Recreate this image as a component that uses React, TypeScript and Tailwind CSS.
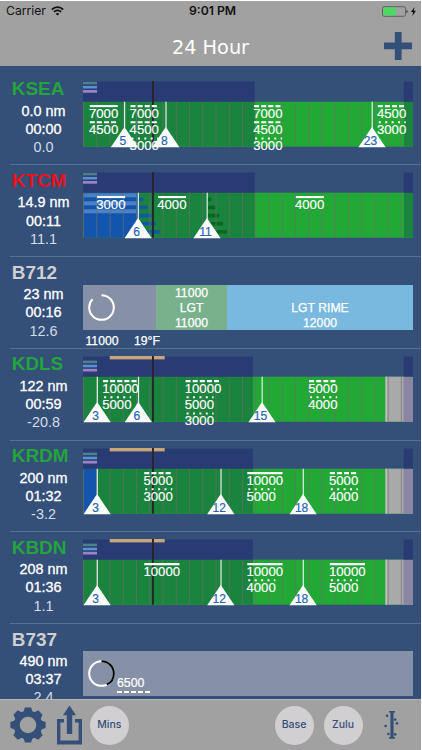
import React from 'react';

type Cover = 'ovc' | 'bkn' | 'sct';

interface Ceiling {
  x: number;
  layers: [Cover, number][];
}

interface Station {
  id: string;
  idClass: string;
  distance: string;
  time: string;
  wind: string;
  nightEnd: number;
  hazard?: boolean;
  markers: [number, number][];
  ceilings: Ceiling[];
  noDataFrom?: number;
  mvfrTo?: number;
  stripes?: boolean;
}

// Chart coordinates: x starts at the chart's left edge, y at the row's top
const CHART_W = 330;
const BAR_TOP = 28.7;
const BAR_H = 45;
const NIGHT_TOP = 8.5;
const FONT = '"Liberation Sans", Arial, sans-serif';

const stations: Station[] = [
  {
    id: 'KSEA',
    idClass: 'text-[#23a43c]',
    distance: '0.0 nm',
    time: '00:00',
    wind: '0.0',
    nightEnd: 171.7,
    markers: [[41.6, 5], [83, 8], [289.2, 23]],
    ceilings: [
      { x: 6, layers: [['ovc', 7000], ['bkn', 4500]] },
      { x: 46.7, layers: [['bkn', 7000], ['bkn', 4500], ['sct', 3000]] },
      { x: 170.3, layers: [['bkn', 7000], ['bkn', 4500], ['sct', 3000]] },
      { x: 294, layers: [['bkn', 4500], ['sct', 3000]] },
    ],
  },
  {
    id: 'KTCM',
    idClass: 'text-[#e8121c]',
    distance: '14.9 nm',
    time: '00:11',
    wind: '11.1',
    nightEnd: 171.7,
    markers: [[55.3, 6], [124.2, 11]],
    mvfrTo: 55.3,
    stripes: true,
    ceilings: [
      { x: 13.3, layers: [['ovc', 3000]] },
      { x: 74.3, layers: [['ovc', 4000]] },
      { x: 212, layers: [['ovc', 4000]] },
    ],
  },
  {
    id: 'KDLS',
    idClass: 'text-[#23a43c]',
    distance: '122 nm',
    time: '00:59',
    wind: '-20.8',
    nightEnd: 170,
    hazard: true,
    markers: [[14.3, 3], [55.5, 6], [179.2, 15]],
    noDataFrom: 302.5,
    ceilings: [
      { x: 19.3, layers: [['bkn', 10000], ['sct', 5000]] },
      { x: 101.8, layers: [['bkn', 10000], ['sct', 5000], ['sct', 3000]] },
      { x: 225.3, layers: [['bkn', 5000], ['sct', 4000]] },
    ],
  },
  {
    id: 'KRDM',
    idClass: 'text-[#23a43c]',
    distance: '200 nm',
    time: '01:32',
    wind: '-3.2',
    nightEnd: 170,
    hazard: true,
    markers: [[14.3, 3], [138, 12], [220.3, 18]],
    mvfrTo: 14,
    noDataFrom: 302.5,
    ceilings: [
      { x: 60.5, layers: [['bkn', 5000], ['sct', 3000]] },
      { x: 163.5, layers: [['ovc', 10000], ['sct', 5000]] },
      { x: 246, layers: [['bkn', 5000], ['sct', 4000]] },
    ],
  },
  {
    id: 'KBDN',
    idClass: 'text-[#23a43c]',
    distance: '208 nm',
    time: '01:36',
    wind: '1.1',
    nightEnd: 170,
    hazard: true,
    markers: [[14.3, 3], [138, 12], [220.3, 18]],
    noDataFrom: 302.5,
    ceilings: [
      { x: 60.5, layers: [['ovc', 10000]] },
      { x: 163.5, layers: [['ovc', 10000], ['sct', 4000]] },
      { x: 246, layers: [['ovc', 10000], ['sct', 5000]] },
    ],
  },
];

const dashes: Record<Cover, string | undefined> = {
  ovc: undefined,
  bkn: '5 2.1',
  sct: '2 4.4',
};

function CeilingLabel({ x, layers }: Ceiling) {
  return (
    <g>
      {layers.map(([cover, feet], i) => {
        const width = String(feet).length * 7.2;
        const y = 33.1 + i * 16.2;
        return (
          <g key={i}>
            <line
              x1={cover === 'sct' ? x + 1.8 : x + 0.8}
              x2={x + width}
              y1={y}
              y2={y}
              stroke="#fff"
              strokeWidth="2.1"
              strokeDasharray={dashes[cover]}
            />
            <text x={x - 0.1} y={y + 11.5} fontSize="13.2" fill="#fff" stroke="#fff" strokeWidth="0.15" fontFamily={FONT}>
              {feet}
            </text>
          </g>
        );
      })}
    </g>
  );
}

function Marker({ x, hour }: { x: number; hour: number }) {
  return (
    <g>
      <line x1={x} x2={x} y1={BAR_TOP} y2={58} stroke="#e6efe8" strokeWidth="1.2" />
      <polygon points={`${x - 0.2},54 ${x - 13.8},74.2 ${x + 13.4},74.2`} fill="#fff" />
      <text
        x={x - 1.7}
        y="71.8"
        fontSize="12"
        textAnchor="middle"
        fill="#2564b4"
        stroke="#2564b4"
        strokeWidth="0.2"
        fontFamily={FONT}
      >
        {hour}
      </text>
    </g>
  );
}

function StationChart({ station }: { station: Station }) {
  const { nightEnd, hazard, markers, ceilings, noDataFrom, mvfrTo, stripes } = station;
  const legendTop = hazard ? 12.6 : 8.8;
  const hours = Array.from({ length: 25 }, (_, i) => 0.6 + i * 13.24);

  return (
    <svg className="block overflow-visible" width={CHART_W} height="91.7">
      <rect y={BAR_TOP} width={CHART_W} height={BAR_H} fill="#22a835" />
      <rect y={BAR_TOP} width={nightEnd} height={BAR_H} fill="#1a833d" />
      <rect x="321" y={BAR_TOP} width="9" height={BAR_H} fill="#1a833d" />
      {noDataFrom && (
        <>
          <rect x={noDataFrom} y={BAR_TOP} width={CHART_W - noDataFrom} height={BAR_H} fill="#a9a9a9" />
          <rect x={noDataFrom} y={BAR_TOP} width="1.5" height={BAR_H} fill="#c0c0c0" />
          <rect x="320.5" y={BAR_TOP} width="9.5" height={BAR_H} fill="#8985a2" />
        </>
      )}
      {mvfrTo && <rect x="0.5" y={BAR_TOP} width={mvfrTo - 0.5} height={BAR_H} fill="#1354ad" />}
      {stripes && (
        <>
          {[0, 8, 16].map((dy) => (
            <rect key={dy} x="0.5" y={29.3 + dy} width="52.8" height="4" fill="#4c82c3" />
          ))}
          {[0, 1, 2, 3, 4].map((i) => (
            <g key={i}>
              <rect x="55.3" y={33.6 + i * 8.1} width={5 + i * 4.1} height="3.6" fill="#1354ad" />
              <rect x="124.2" y={33.6 + i * 8.1} width={4.2 + i * 3.9} height="3.6" fill="#09671f" />
            </g>
          ))}
        </>
      )}
      {hours.map((x) => (
        <line key={x} x1={x} x2={x} y1={BAR_TOP} y2={BAR_TOP + BAR_H} stroke="#6e6e6e" strokeOpacity="0.65" />
      ))}
      <rect y={NIGHT_TOP} width={nightEnd} height={BAR_TOP - NIGHT_TOP} fill="#293b73" />
      <rect x="320.7" y={NIGHT_TOP} width="9.3" height={BAR_TOP - NIGHT_TOP} fill="#293b73" />
      {hazard && <rect x="26.7" y="8" width="55" height="3.4" fill="#c9a679" />}
      <rect y={legendTop} width="14" height="2.6" fill="#4d8088" />
      <rect y={legendTop + 4.1} width="14" height="2.6" fill="#5a92cf" />
      <rect y={legendTop + 8.2} width="14" height="2.7" fill="#9c83c5" />
      <rect x="69" y={NIGHT_TOP - 0.5} width="1.9" height="65.7" fill="#27242b" />
      {markers.map(([x, hour]) => (
        <Marker key={hour} x={x} hour={hour} />
      ))}
      {ceilings.map((c) => (
        <CeilingLabel key={c.x} {...c} />
      ))}
    </svg>
  );
}

interface RowProps {
  id: string;
  idClass: string;
  distance: string;
  time: string;
  wind: string;
  children: React.ReactNode;
}

function Row({ id, idClass, distance, time, wind, children }: RowProps) {
  return (
    <div className="flex h-[91.7px] shrink-0">
      <div className="w-[83px] shrink-0 pt-[4.6px] text-white">
        <div className={`pl-[11.8px] text-[18.9px] leading-[23px] font-bold ${idClass}`}>{id}</div>
        <div className="w-[87px] text-center text-[14.4px] leading-[18.2px]">
          <div className="mt-[1.4px] [-webkit-text-stroke:0.3px_white]">{distance}</div>
          <div className="[-webkit-text-stroke:0.3px_white]">{time}</div>
          <div className="text-[#d5dce6]">{wind}</div>
        </div>
      </div>
      {children}
    </div>
  );
}

function Divider() {
  return <div className="-mb-px ml-[10px] h-px shrink-0 bg-[#5a7093]" />;
}

function IcingChart() {
  return (
    <div className="w-[330px] pt-[28.7px] text-[12.2px] text-white [-webkit-text-stroke:0.25px_white]">
      <div className="flex h-[45px]">
        <div className="w-[73px] bg-[#8690a7] pt-[9px] pl-[4.5px]">
          <svg width="27" height="27" fill="none" strokeWidth="2">
            <circle cx="13.5" cy="13.5" r="12.3" stroke="#8b8f96" />
            <circle cx="13.5" cy="13.5" r="12.3" stroke="#fff" pathLength="100" strokeDasharray="87 13" transform="rotate(-90 13.5 13.5)" />
          </svg>
        </div>
        <div className="flex w-[71px] flex-col items-center bg-[#79b18c] pt-[0.8px] text-center leading-[15.4px]">
          <div>11000</div>
          <div>LGT</div>
          <div>11000</div>
        </div>
        <div className="w-[186px] bg-[#79b8df] pt-[16.2px] text-center leading-[15.4px]">
          <div>LGT RIME</div>
          <div>12000</div>
        </div>
      </div>
      <div className="flex gap-[15.5px] pt-[3.3px] pl-[2.5px] leading-[16px]">
        <span>11000</span>
        <span>19°F</span>
      </div>
    </div>
  );
}

function CloudChart() {
  return (
    <div className="w-[330px] pt-[28.5px] text-white">
      <div className="flex h-[45px] bg-[#8691a7] pt-[9px] pl-[4.5px]">
        <svg width="27" height="27" fill="none" strokeWidth="2">
          <circle cx="13.5" cy="13.5" r="12.3" stroke="#fff" />
          <circle cx="13.5" cy="13.5" r="12.3" stroke="#000" pathLength="100" strokeDasharray="43 57" transform="rotate(-90 13.5 13.5)" />
        </svg>
        <div className="pt-[14.5px] pl-[2.5px]">
          <div className="text-[12.3px] leading-[16px] [-webkit-text-stroke:0.2px_white]">6500</div>
          <svg className="block" width="33" height="3">
            <line x1="0" x2="33" y1="1" y2="1" stroke="#fff" strokeWidth="2" strokeDasharray="5 2" />
          </svg>
        </div>
      </div>
    </div>
  );
}

function StatusBar() {
  return (
    <div className="flex h-[21px] items-center justify-between pr-[5px] pl-[6px] font-['Inter'] text-[12.2px] text-[#111]">
      <div className="flex w-[80px] items-center gap-[5.5px]">
        <span>Carrier</span>
        <svg width="13" height="10" viewBox="0 0 13 10" fill="none" stroke="#111" strokeWidth="1.7">
          <path d="M0.8 3.6 C4 0.2 9 0.2 12.2 3.6" />
          <path d="M2.9 5.8 C4.9 3.8 8.1 3.8 10.1 5.8" />
          <path d="M6.5 9.6 L4.6 7.7 C5.6 6.7 7.4 6.7 8.4 7.7 Z" fill="#111" stroke="none" />
        </svg>
      </div>
      <span className="pl-[3px] text-[12.2px] font-semibold">9:01 PM</span>
      <div className="flex w-[80px] items-center justify-end gap-[2px]">
        <svg width="27" height="11" viewBox="0 0 27 11">
          <rect x="0.5" y="0.7" width="23" height="9.6" rx="1.8" fill="none" stroke="#5f5f5f" />
          <rect x="1.3" y="1.5" width="12.7" height="8" rx="0.8" fill="#4cd964" />
          <path d="M24.6 3.8 C26 4.4 26 6.6 24.6 7.2 Z" fill="#222" />
        </svg>
        <svg width="5" height="9" viewBox="0 0 5 9">
          <path d="M3.5 0 L0 5 H2.1 L1.3 9 L5 3.7 H2.8 Z" fill="#111" />
        </svg>
      </div>
    </div>
  );
}

function GearIcon() {
  return (
    <svg width="36" height="36" viewBox="-18 -18 36 36" fill="#345079">
      {[0, 45, 90, 135, 180, 225, 270, 315].map((deg) => (
        <path key={deg} d="M-5.2 -11 L-3.1 -17.6 H3.1 L5.2 -11 Z" transform={`rotate(${deg})`} />
      ))}
      <circle r="11.3" fill="none" stroke="#345079" strokeWidth="6" />
    </svg>
  );
}

function ShareIcon() {
  return (
    <svg width="26" height="40" viewBox="0 0 26 40" fill="#345079">
      <path d="M0 14 H7 V17.4 H3.4 V35.6 H21.6 V17.4 H18 V14 H25 V39.4 H0 Z" />
      <path d="M12.5 0.4 L19 10.3 H15.2 V29 H9.8 V10.3 H6 Z" />
    </svg>
  );
}

function TurbulenceIcon() {
  return (
    <svg width="16" height="28" viewBox="0 0 16 28" fill="#345079">
      <path d="M5 0 H11 V1.5 H9.6 V26.3 H11 V27.8 H5 V26.3 H6.4 V1.5 H5 Z" />
      <circle cx="3.1" cy="4.8" r="1.3" />
      <circle cx="11.2" cy="8.6" r="1.3" />
      <circle cx="13" cy="12.4" r="1.3" />
      <circle cx="1.6" cy="15" r="1.3" />
      <circle cx="4.4" cy="23" r="1.3" />
      <circle cx="11.2" cy="23.4" r="1.3" />
    </svg>
  );
}

function RoundButton({ label }: { label: string }) {
  return (
    <button className="size-[39px] shrink-0 rounded-full bg-[#d1cfd1] font-['Inter'] text-[10.5px] font-medium text-[#345079]">
      {label}
    </button>
  );
}

export default function App() {
  const [ksea, ktcm, ...rest] = stations;

  const renderStation = (station: Station) => (
    <React.Fragment key={station.id}>
      <Divider />
      <Row {...station}>
        <StationChart station={station} />
      </Row>
    </React.Fragment>
  );

  return (
    <div className="h-[750px] w-[422px] bg-white pt-px pr-px">
      <div className="flex h-full flex-col overflow-hidden bg-[#345079] font-['Liberation_Sans',Arial,sans-serif]">
        <header className="h-[65px] shrink-0 bg-[#a1a1a1]">
          <StatusBar />
          <div className="grid h-[44px] grid-cols-3 items-center">
            <h1 className="col-start-2 pt-[9px] text-center font-['DejaVu_Sans',sans-serif] text-[19.3px] whitespace-nowrap text-white">
              24 Hour
            </h1>
            <svg className="mt-[3px] mr-[8.5px] justify-self-end" width="28.5" height="28" viewBox="0 0 28.5 28" fill="#345079">
              <path d="M10.8 0 H17.6 V10.6 H28.5 V17.2 H17.6 V28 H10.8 V17.2 H0 V10.6 H10.8 Z" />
            </svg>
          </div>
        </header>

        <main className="flex min-h-0 flex-1 flex-col overflow-hidden pt-[6.8px]">
          <Row {...ksea}>
            <StationChart station={ksea} />
          </Row>
          {renderStation(ktcm)}
          <Divider />
          <Row id="B712" idClass="text-[#cfcfd1]" distance="23 nm" time="00:16" wind="12.6">
            <IcingChart />
          </Row>
          {rest.map(renderStation)}
          <Divider />
          <Row id="B737" idClass="text-[#cfcfd1]" distance="490 nm" time="03:37" wind="2.4">
            <CloudChart />
          </Row>
        </main>

        <footer className="flex h-[51px] shrink-0 items-center border-t border-[#b5b5b5] bg-[#a1a1a1] pr-[21px] pl-[10.3px]">
          <GearIcon />
          <div className="ml-[10.5px]">
            <ShareIcon />
          </div>
          <div className="ml-[7px] flex">
            <RoundButton label="Mins" />
          </div>
          <div className="ml-auto flex items-center gap-[10px]">
            <RoundButton label="Base" />
            <RoundButton label="Zulu" />
          </div>
          <div className="ml-[21.5px]">
            <TurbulenceIcon />
          </div>
        </footer>
      </div>
    </div>
  );
}
